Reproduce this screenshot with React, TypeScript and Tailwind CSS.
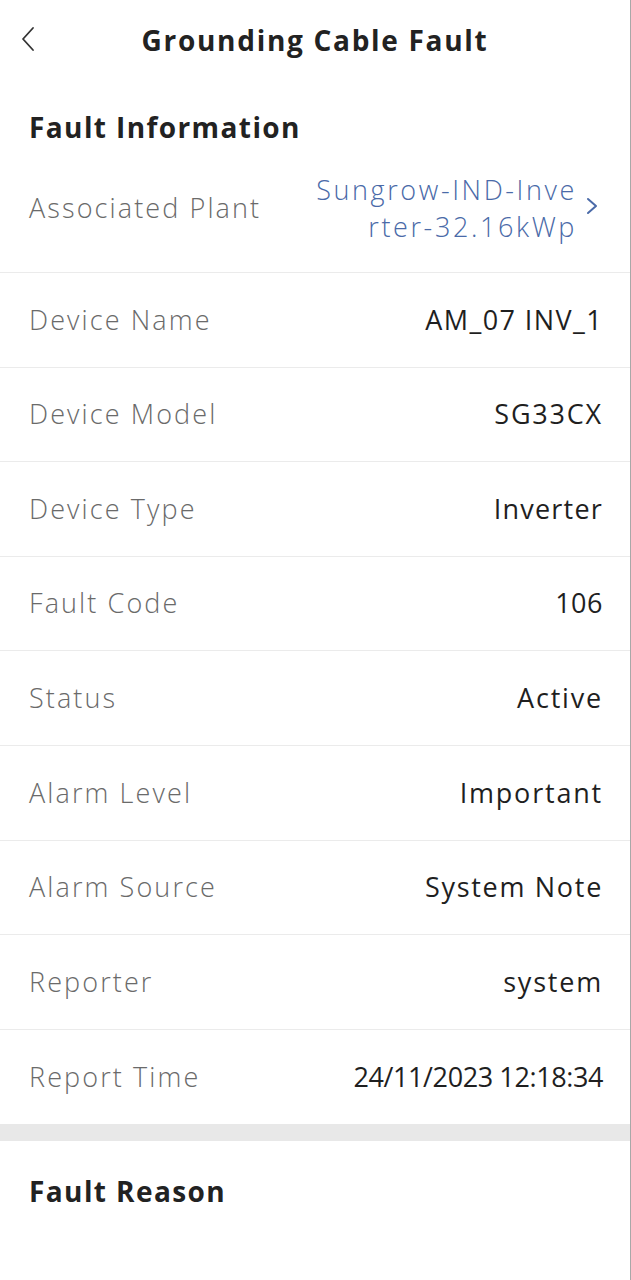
const rows = [
  { label: "Device Name", value: "AM_07 INV_1", track: "tracking-[1.4px]" },
  { label: "Device Model", value: "SG33CX", track: "tracking-[1.8px]" },
  { label: "Device Type", value: "Inverter", track: "tracking-[1.2px]" },
  { label: "Fault Code", value: "106", track: "tracking-[0.5px]" },
  { label: "Status", value: "Active", track: "tracking-[1.8px]" },
  { label: "Alarm Level", value: "Important", track: "tracking-[1.8px]" },
  { label: "Alarm Source", value: "System Note", track: "tracking-[1.7px]" },
  { label: "Reporter", value: "system", track: "tracking-[1.8px]" },
  { label: "Report Time", value: "24/11/2023 12:18:34", track: "tracking-[-0.4px]" },
];

const App = () => {
  return (
    <div
      className="min-h-[1280px] w-[631px] bg-white border-r border-[#a8a8a8]"
      style={{ fontFamily: '"Open Sans", Arial, sans-serif' }}
    >
      {/* Header */}
      <div className="relative h-20 flex items-center justify-center">
        <button className="absolute left-[20px] top-[26px] text-[#333]">
          <svg width="16" height="26" viewBox="0 0 16 26" fill="none">
            <polyline
              points="13,2 3,13 13,24"
              stroke="currentColor"
              strokeWidth="1.8"
              strokeLinecap="round"
              strokeLinejoin="round"
            />
          </svg>
        </button>
        <h1 className="text-[28px] font-bold tracking-[1.7px] text-[#222]">
          Grounding Cable Fault
        </h1>
      </div>

      {/* Fault Information */}
      <div className="pt-[30px] px-[29px]">
        <h2 className="text-[28px] leading-[34px] font-bold tracking-[1.4px] text-[#222]">
          Fault Information
        </h2>
      </div>

      <div className="h-[129px] flex items-center justify-between pl-[29px] pr-[31px] border-b border-[#ebebeb]">
        <span className="text-[27px] font-light tracking-[2.1px] text-[#6a6a6a]">
          Associated Plant
        </span>
        <div className="flex items-center gap-[8px] text-[#4a6aa8]">
          <p className="text-right text-[27px] leading-[37px] font-light tracking-[2.6px]">
            Sungrow-IND-Inve
            <br />
            rter-32.16kWp
          </p>
          <svg width="14" height="18" viewBox="0 0 14 18" fill="none" className="-mt-[4px]">
            <polyline
              points="3,2 11,9 3,16"
              stroke="currentColor"
              strokeWidth="2"
              strokeLinecap="round"
              strokeLinejoin="round"
            />
          </svg>
        </div>
      </div>

      {rows.map((r, i) => (
        <div
          key={r.label}
          className={`h-[94.6px] flex items-center justify-between pl-[29px] pr-[27px] ${
            i < rows.length - 1 ? "border-b border-[#ebebeb]" : ""
          }`}
        >
          <span className="text-[27px] font-light tracking-[2.1px] text-[#6a6a6a]">
            {r.label}
          </span>
          <span className={`text-[27px] text-[#1f1f1f] ${r.track}`}>{r.value}</span>
        </div>
      ))}

      <div className="h-[17px] bg-[#e8e8e8]" />

      {/* Fault Reason */}
      <div className="pt-[33px] px-[29px]">
        <h2 className="text-[28px] leading-[34px] font-bold tracking-[1.4px] text-[#222]">
          Fault Reason
        </h2>
      </div>
    </div>
  );
};

export default App;
